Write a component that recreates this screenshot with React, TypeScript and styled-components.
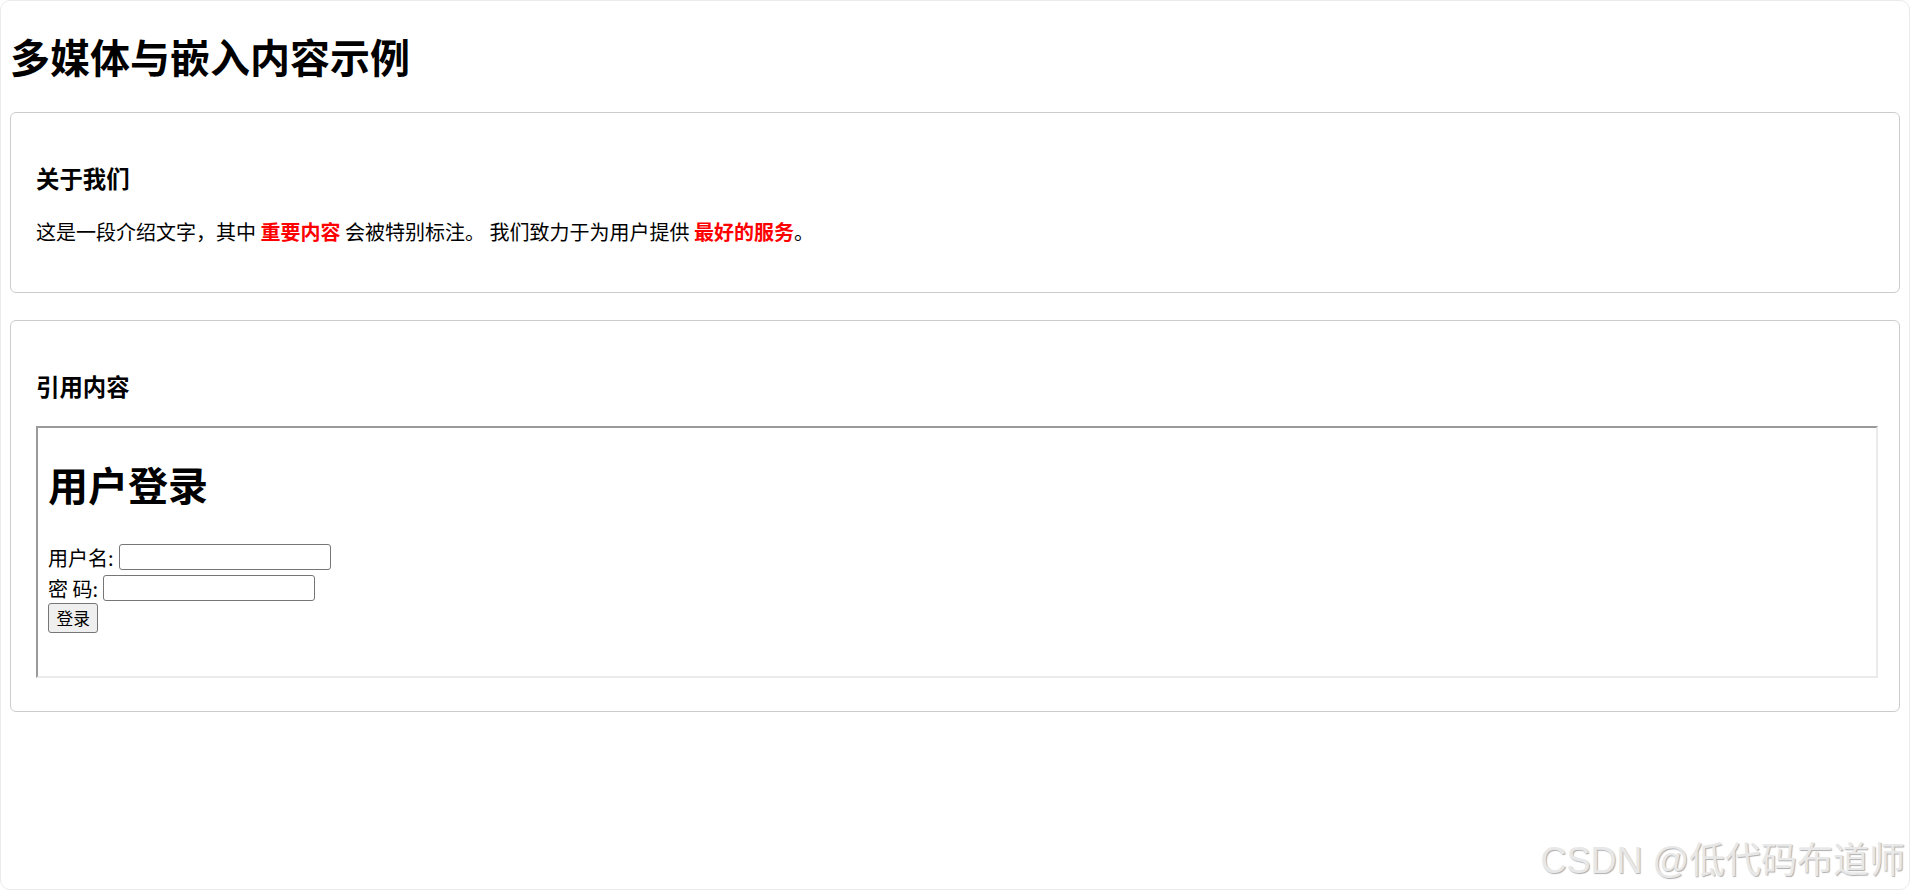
import React from 'react';
import styled, { createGlobalStyle } from 'styled-components';

const GlobalStyle = createGlobalStyle`
  html, body {
    margin: 0;
    padding: 0;
    background: #fff;
  }
  body {
    font-family: "Noto Sans CJK SC", "Noto Sans", sans-serif;
    color: #000;
  }
`;

const Page = styled.div`
  position: relative;
  box-sizing: border-box;
  min-height: 100vh;
  padding: 0 9px;
  border: 1px solid #ebebeb;
  border-radius: 10px;
  overflow: hidden;
`;

const PageTitle = styled.h1`
  margin: 31px 0 32px;
  font-size: 40px;
  line-height: 48px;
  font-weight: 700;
`;

const Card = styled.section`
  border: 1px solid #cccccc;
  border-radius: 6px;
  padding: 25px;
  margin-bottom: 27px;
`;

const CardTitle = styled.h3`
  margin: 24px 0;
  font-size: 23.4px;
  line-height: 32px;
  font-weight: 700;
`;

const Text = styled.p`
  margin: 0 0 21px;
  font-size: 20px;
  line-height: 28px;
`;

const Highlight = styled.strong`
  color: #ff0000;
  font-weight: 700;
`;

// mimics the embedded page (iframe with its default inset border)
const Frame = styled.div`
  box-sizing: content-box;
  width: 100%;
  height: 248px;
  border: 2px solid;
  border-color: #9a9a9a #ebebeb #ebebeb #9a9a9a;
  margin-bottom: 8px;
  overflow: hidden;
`;

const FrameBody = styled.div`
  padding: 10px;
`;

const FrameTitle = styled.h1`
  margin: 22px 0 33px;
  font-size: 40px;
  line-height: 48px;
  font-weight: 700;
`;

const FieldRow = styled.div<{ $h: number }>`
  display: flex;
  align-items: center;
  height: ${p => p.$h}px;
  font-size: 20px;
`;

const FieldLabel = styled.span`
  margin-right: 5px;
  white-space: pre;
`;

const TextInput = styled.input`
  box-sizing: border-box;
  width: 212px;
  height: 26px;
  margin: 0;
  padding: 1px 3px;
  border: 1px solid #767676;
  border-radius: 3px;
  background: #fff;
  font-size: 16.7px;
`;

const SubmitButton = styled.button`
  box-sizing: border-box;
  height: 30px;
  margin: 0;
  padding: 0 7.5px;
  border: 1px solid #767676;
  border-radius: 3px;
  background: #efefef;
  color: #000;
  font-family: "Noto Sans CJK SC", sans-serif;
  font-size: 16.7px;
  line-height: 1;
`;

const Watermark = styled.div`
  position: absolute;
  right: 4px;
  bottom: 6px;
  font-family: "Liberation Sans", "Noto Sans CJK SC", sans-serif;
  font-size: 36px;
  line-height: 44px;
  color: #e8e8e8;
  text-shadow: 1px 1px 1px rgba(0, 0, 0, 0.32), -1px -1px 0 rgba(255, 255, 255, 0.9);
  white-space: nowrap;
  pointer-events: none;
`;

function App() {
  return (
    <>
      <GlobalStyle />
      <Page>
        <PageTitle>多媒体与嵌入内容示例</PageTitle>

        <Card>
          <CardTitle>关于我们</CardTitle>
          <Text>
            这是一段介绍文字，其中 <Highlight>重要内容</Highlight> 会被特别标注。 我们致力于为用户提供{' '}
            <Highlight>最好的服务</Highlight>。
          </Text>
        </Card>

        <Card>
          <CardTitle>引用内容</CardTitle>
          <Frame>
            <FrameBody>
              <FrameTitle>用户登录</FrameTitle>
              <FieldRow $h={32}>
                <FieldLabel>用户名:</FieldLabel>
                <TextInput type="text" />
              </FieldRow>
              <FieldRow $h={30}>
                <FieldLabel>密 码:</FieldLabel>
                <TextInput type="password" />
              </FieldRow>
              <FieldRow $h={30}>
                <SubmitButton type="button">登录</SubmitButton>
              </FieldRow>
            </FrameBody>
          </Frame>
        </Card>

        <Watermark>CSDN @低代码布道师</Watermark>
      </Page>
    </>
  );
}

export default App;
